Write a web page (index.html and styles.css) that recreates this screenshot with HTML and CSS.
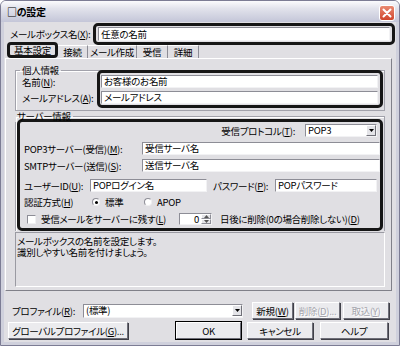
FILE: index.html
```html
<!DOCTYPE html>
<html lang="ja">
    <head>
        <meta charset="UTF-8">
        <meta name="viewport" content="width=device-width, initial-scale=1.0">
        <title>□の設定</title>
        <link rel="stylesheet" href="styles.css">
    </head>
    <body>
        <div class="window">
            <div class="titlebar">
                <span class="title">□の設定</span>
                <span class="close">
                    <svg width="10" height="10" viewBox="0 0 10 10"><path d="M1.5 1.5 L8.5 8.5 M8.5 1.5 L1.5 8.5" stroke="#fff" stroke-width="2" stroke-linecap="round"/></svg>
                </span>
            </div>
            <div class="client">
                <div class="name-row">
                    <span class="name-label">メールボックス名(<u>X</u>):</span>
                    <div class="mark mark-name"><div class="field">任意の名前</div></div>
                </div>
                <div class="tabs">
                    <span class="tab active">基本設定</span>
                    <span class="tab w-conn">接続</span>
                    <span class="tab w-mail">メール作成</span>
                    <span class="tab w-recv">受信</span>
                    <span class="tab w-more">詳細</span>
                </div>
                <div class="panel">
                    <fieldset class="group group-personal">
                        <legend>個人情報</legend>
                        <div class="personal">
                            <div class="personal-labels">
                                <span>名前(<u>N</u>):</span>
                                <span>メールアドレス(<u>A</u>):</span>
                            </div>
                            <div class="mark mark-personal">
                                <div class="field">お客様のお名前</div>
                                <div class="field">メールアドレス</div>
                            </div>
                        </div>
                    </fieldset>
                    <fieldset class="group group-server">
                        <legend>サーバー情報</legend>
                        <div class="mark mark-server">
                            <div class="row row-protocol">
                                <span class="proto-label">受信プロトコル(<u>T</u>):</span>
                                <div class="combo combo-proto">
                                    <span class="combo-text">POP3</span>
                                    <span class="drop"><svg width="5" height="3" viewBox="0 0 5 3"><path d="M0 0 H5 L2.5 3 Z" fill="#000"/></svg></span>
                                </div>
                            </div>
                            <div class="row row-pop">
                                <span class="lbl lbl-server">POP3サーバー(受信)(<u>M</u>):</span>
                                <div class="field field-server">受信サーバ名</div>
                            </div>
                            <div class="row row-smtp">
                                <span class="lbl lbl-server">SMTPサーバー(送信)(<u>S</u>):</span>
                                <div class="field field-server">送信サーバ名</div>
                            </div>
                            <div class="row row-user">
                                <span class="lbl lbl-user">ユーザーID(<u>U</u>):</span>
                                <div class="field field-user">POPログイン名</div>
                                <span class="lbl lbl-pass">パスワード(<u>P</u>):</span>
                                <div class="field field-pass">POPパスワード</div>
                            </div>
                            <div class="row row-auth">
                                <span class="lbl lbl-user">認証方式(<u>H</u>)</span>
                                <span class="radio checked"></span>
                                <span class="radio-text">標準</span>
                                <span class="radio"></span>
                                <span class="radio-text">APOP</span>
                            </div>
                            <div class="row row-keep">
                                <span class="check"></span>
                                <span class="keep-label">受信メールをサーバーに残す(<u>L</u>)</span>
                                <div class="spin">
                                    <span class="spin-value">0</span>
                                    <span class="spin-buttons">
                                        <span class="spin-btn"><svg width="5" height="3" viewBox="0 0 5 3"><path d="M0 3 H5 L2.5 0 Z" fill="#555"/></svg></span>
                                        <span class="spin-btn"><svg width="5" height="3" viewBox="0 0 5 3"><path d="M0 0 H5 L2.5 3 Z" fill="#555"/></svg></span>
                                    </span>
                                </div>
                                <span class="days-label">日後に削除(0の場合削除しない)(<u>D</u>)</span>
                            </div>
                        </div>
                    </fieldset>
                    <div class="desc">メールボックスの名前を設定します。<br>識別しやすい名前を付けましょう。</div>
                </div>
                <div class="profile-row">
                    <span class="profile-label">プロファイル(<u>R</u>):</span>
                    <div class="combo combo-profile">
                        <span class="combo-text">(標準)</span>
                        <span class="drop"><svg width="5" height="3" viewBox="0 0 5 3"><path d="M0 0 H5 L2.5 3 Z" fill="#000"/></svg></span>
                    </div>
                    <span class="btn btn-new">新規(<u>W</u>)</span>
                    <span class="btn btn-del disabled">削除(<u>D</u>)...</span>
                    <span class="btn btn-imp disabled">取込(<u>Y</u>)</span>
                </div>
                <div class="button-row">
                    <span class="btn btn-global">グローバルプロファイル(<u>G</u>)...</span>
                    <span class="btn btn-ok default">OK</span>
                    <span class="btn btn-cancel">キャンセル</span>
                    <span class="btn btn-help">ヘルプ</span>
                </div>
            </div>
        </div>
    </body>
</html>
```

FILE: styles.css
```css
body {
    margin: 0;
    font-family: "Noto Sans CJK JP", "Liberation Sans", sans-serif;
    font-size: 9.5px;
    letter-spacing: -0.3px;
    line-height: 12px;
    color: #000;
    font-feature-settings: "palt";
    white-space: nowrap;
    background: #fff;
}
u {
    text-decoration-thickness: 1px;
    text-underline-offset: 1px;
}
.window {
    width: 400px;
    height: 346px;
    box-sizing: border-box;
    border: 1px solid #7c7c94;
    border-radius: 6px 6px 0 0;
    background: #e0dfe3;
    display: flex;
    flex-direction: column;
    overflow: hidden;
}
.titlebar {
    height: 21px;
    flex-shrink: 0;
    display: flex;
    align-items: center;
    justify-content: space-between;
    padding: 0 4px 0 6px;
    background: linear-gradient(#fbfbfd, #e2e3ec 35%, #c4c6d8);
}
.title {
    font-weight: bold;
    font-size: 10px;
}
.close {
    width: 14px;
    height: 14px;
    margin-top: 2px;
    border: 1px solid #fff;
    border-radius: 3px;
    background: linear-gradient(#e98a72, #d0452c);
    display: flex;
    align-items: center;
    justify-content: center;
}
.client {
    flex: 1;
    display: flex;
    flex-direction: column;
    border: 3px solid #cfd0dc;
    border-top: none;
}

/* highlight frames */
.mark {
    border: 3px solid #161616;
    border-radius: 5px;
    box-sizing: border-box;
}

/* white edit boxes */
.field {
    height: 13px;
    box-sizing: border-box;
    background: #fff;
    border: 1px solid;
    border-color: #8d8d96 #f2f2f4 #f2f2f4 #8d8d96;
    padding: 0 2px;
    line-height: 11px;
    overflow: hidden;
}

.name-row {
    display: flex;
    align-items: center;
    height: 22px;
    margin-top: 1px;
    padding-left: 6px;
}
.name-label {
    width: 83px;
}
.mark-name {
    width: 302px;
    height: 22px;
    padding: 1px 2px;
}
.mark-name .field {
    height: 14px;
    line-height: 12px;
}

.tabs {
    display: flex;
    align-items: flex-end;
    height: 16px;
    margin-top: -3px;
    padding-left: 3px;
}
.tab {
    height: 13px;
    box-sizing: border-box;
    border-top: 1px solid #fff;
    border-right: 1px solid #8d8d96;
    text-align: center;
    line-height: 12px;
}
.tab.active {
    width: 51px;
    height: 16px;
    border: 3px solid #161616;
    border-radius: 4px;
    line-height: 10px;
}
.w-conn { width: 30px; }
.w-mail { width: 49px; }
.w-recv { width: 31px; }
.w-more { width: 31px; }

.panel {
    height: 233px;
    box-sizing: border-box;
    margin: 0 4px 0 1px;
    border: 1px solid;
    border-color: #fff #808089 #808089 #fff;
    padding: 6px 6px 2px 9px;
    display: flex;
    flex-direction: column;
}
.group {
    margin: 0;
    min-width: 0;
    border: 1px solid #a2a2ab;
    box-shadow: 1px 1px 0 #fff inset;
}
.group legend {
    padding: 0 2px;
    margin-left: -2px;
    line-height: 11px;
}
.group-personal {
    padding: 0 1px 2px 6px;
}
.personal {
    display: flex;
    margin-top: -6px;
}
.personal-labels {
    width: 75px;
    display: flex;
    flex-direction: column;
    gap: 4px;
    padding-top: 6px;
}
.personal-labels span {
    height: 12px;
    line-height: 12px;
}
.mark-personal {
    width: 286px;
    height: 38px;
    padding: 2px 2px 1px 1px;
    display: flex;
    flex-direction: column;
    gap: 3px;
}

.group-server {
    padding: 0 1px 0 1px;
    border-bottom: none;
}
.mark-server {
    width: 366px;
    height: 112px;
    margin-top: -3px;
    padding: 2px 0 3px 3px;
    display: flex;
    flex-direction: column;
}
.row {
    display: flex;
    align-items: center;
    height: 13px;
}
.row-protocol {
    justify-content: flex-end;
    padding-right: 3px;
}
.proto-label {
    margin-right: 10px;
}
.row-pop { margin-top: 5px; }
.row-smtp { margin-top: 4px; }
.row-user { margin-top: 7px; }
.row-auth { margin-top: 4px; height: 12px; }
.row-keep { margin-top: 5px; height: 12px; }
.lbl {
    padding-left: 1px;
}
.lbl-server { width: 118px; }
.field-server { width: 238px; }
.lbl-user { width: 66px; }
.field-user { width: 117px; }
.lbl-pass {
    width: 62px;
    margin-left: 6px;
    padding-left: 0;
}
.field-pass { width: 102px; }

.combo {
    height: 13px;
    box-sizing: border-box;
    background: #fff;
    border: 1px solid;
    border-color: #8d8d96 #f2f2f4 #f2f2f4 #8d8d96;
    display: flex;
    align-items: center;
    justify-content: space-between;
}
.combo-text {
    padding-left: 2px;
    line-height: 11px;
}
.drop {
    width: 10px;
    height: 11px;
    box-sizing: border-box;
    background: #e4e4e8;
    border: 1px solid;
    border-color: #fff #707078 #707078 #fff;
    display: flex;
    align-items: center;
    justify-content: center;
}
.combo-proto { width: 72px; }

.radio {
    width: 8px;
    height: 8px;
    box-sizing: border-box;
    border-radius: 50%;
    border: 1px solid;
    border-color: #8d8d96 #f0f0f2 #f0f0f2 #8d8d96;
    background: #fff;
    margin-left: 2px;
    display: flex;
    align-items: center;
    justify-content: center;
}
.radio.checked::after {
    content: "";
    width: 3px;
    height: 3px;
    border-radius: 50%;
    background: #000;
}
.radio-text {
    margin-left: 5px;
    width: 37px;
}
.check {
    width: 9px;
    height: 9px;
    box-sizing: border-box;
    background: #fff;
    border: 1px solid;
    border-color: #8d8d96 #f0f0f2 #f0f0f2 #8d8d96;
    margin-left: 4px;
}
.keep-label {
    margin-left: 5px;
    width: 138px;
}
.spin {
    display: flex;
    height: 12px;
    width: 33px;
    box-sizing: border-box;
    background: #fff;
    border: 1px solid;
    border-color: #8d8d96 #f2f2f4 #f2f2f4 #8d8d96;
}
.spin-value {
    flex: 1;
    text-align: right;
    padding-right: 2px;
    line-height: 10px;
}
.spin-buttons {
    width: 10px;
    display: flex;
    flex-direction: column;
}
.spin-btn {
    flex: 1;
    background: #e4e4e8;
    border: 1px solid;
    border-color: #fff #8d8d96 #8d8d96 #fff;
    box-sizing: border-box;
    display: flex;
    align-items: center;
    justify-content: center;
}
.days-label {
    margin-left: 8px;
}

.desc {
    height: 55px;
    box-sizing: border-box;
    margin-top: 1px;
    border: 1px solid;
    border-color: #9a9aa2 #fff #fff #9a9aa2;
    padding: 3px 1px 0;
    line-height: 11px;
}

.profile-row {
    display: flex;
    align-items: center;
    height: 17px;
    margin-top: 11px;
    padding-left: 8px;
}
.profile-label {
    width: 71px;
}
.combo-profile {
    width: 160px;
    height: 14px;
    margin-right: 9px;
}
.btn {
    height: 17px;
    box-sizing: border-box;
    background: #ebebee;
    border: 1px solid;
    border-color: #fff #6e6e78 #6e6e78 #fff;
    box-shadow: 1px 1px 0 #404048;
    display: flex;
    align-items: center;
    justify-content: center;
}
.btn.disabled {
    color: #a4a4ac;
    text-shadow: 1px 1px 0 #fff;
}
.btn.default {
    outline: 1px solid #000;
}
.btn-new { width: 41px; }
.btn-del { width: 45px; margin-left: 2px; }
.btn-imp { width: 46px; margin-left: 3px; }

.button-row {
    display: flex;
    align-items: center;
    height: 17px;
    margin-top: 3px;
    padding-left: 4px;
}
.btn-global { width: 120px; }
.btn-ok { width: 65px; margin-left: 48px; }
.btn-cancel { width: 66px; margin-left: 6px; }
.btn-help { width: 68px; margin-left: 7px; }
```
